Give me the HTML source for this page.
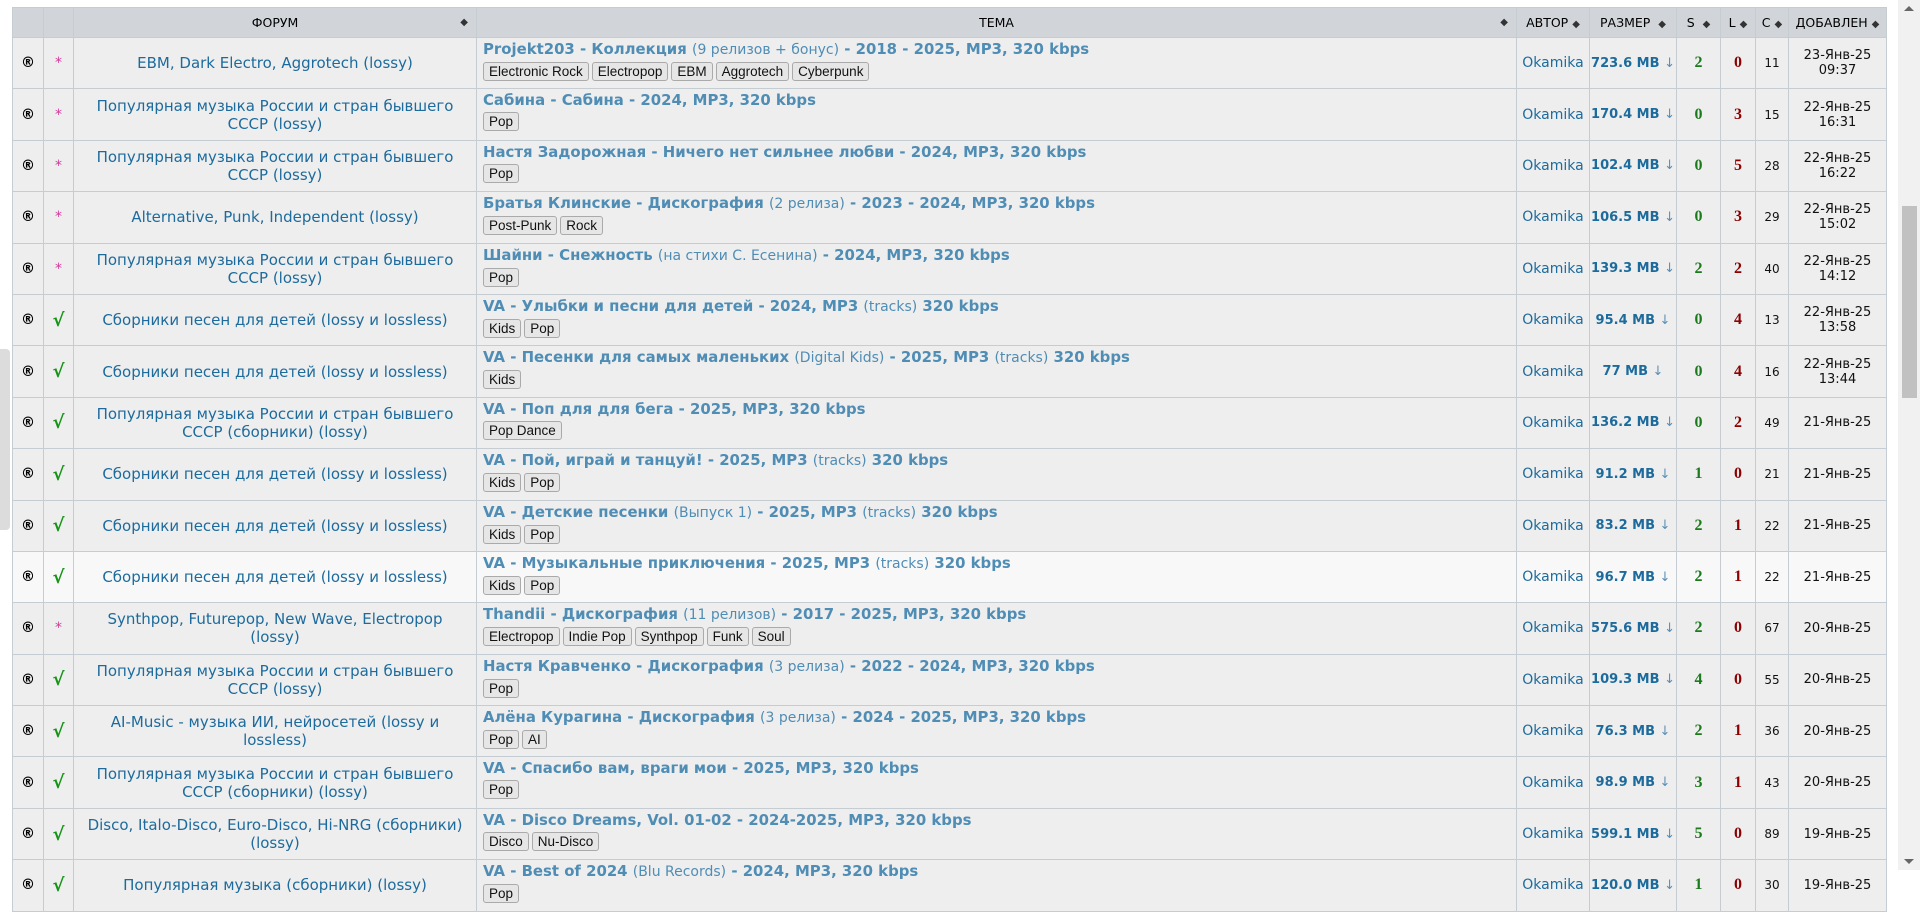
<!DOCTYPE html>
<html><head><meta charset="utf-8">
<style>
html,body{margin:0;padding:0;background:#fff;width:1920px;height:870px;overflow:hidden;font-family:"DejaVu Sans",Verdana,sans-serif;}
table{position:absolute;left:12px;top:7px;border-collapse:collapse;table-layout:fixed;width:1874px;}
td,th{border:1px solid #c5ccd2;text-align:center;vertical-align:middle;padding:0;overflow:hidden;}
th{background:#d1d5d9;height:29px;font-weight:normal;font-size:12.5px;color:#000;position:relative;}
th .s{font-size:10px;color:#333;}
tr.row{height:50.4px;}
td{background:#eeeeee;height:49.4px;font-size:13px;}
tr.hl td{background:#f8f8f8;}
.f{color:#1d6b9c;font-size:15px;line-height:18px;padding:0 8px;}
.t{text-align:left;padding:1px 6px 0 6px;vertical-align:top;}
.tt{color:#4f8db5;font-weight:bold;font-size:14.9px;line-height:18px;white-space:nowrap;display:block;margin-top:1px;}
.tt i{font-style:normal;font-weight:normal;font-size:14px;}
.tag{display:inline-block;vertical-align:top;font-family:"Liberation Sans",Arial,sans-serif;font-size:13.5px;color:#111;background:#e6e6e6;border:1px solid #aaa;border-radius:3px;padding:1px 5px;margin-right:3px;line-height:15px;margin-top:3px;}
.a{color:#1d6b9c;font-size:14px;}
.sz{color:#1d6b9c;font-weight:bold;font-size:13px;white-space:nowrap;}
.sz span{font-weight:normal;color:#5a8fb5;}
.se{color:#1b7a1b;font-weight:bold;font-family:"Liberation Serif",Georgia,serif;font-size:16px;}
.le{color:#8b0000;font-weight:bold;font-family:"Liberation Serif",Georgia,serif;font-size:16px;}
.c{font-size:12px;color:#111;}
.d{font-size:13px;color:#111;line-height:15px;}
.r{font-size:14px;font-weight:bold;}
.st{color:#d0379a;font-size:14px;}
.ok{color:#159415;font-size:18px;font-weight:bold;}
.sb{position:absolute;right:0;top:0;width:22px;height:870px;background:#f1f1f1;}
.sb .th{position:absolute;left:4px;top:206px;width:15px;height:192px;background:#c1c1c1;}
.lh{position:absolute;left:0;top:349px;width:10px;height:181px;background:#dcdcdc;border-radius:0 4px 4px 0;}
</style></head><body>
<table>
<colgroup><col style="width:31px"><col style="width:30px"><col style="width:403px"><col style="width:1040px"><col style="width:73px"><col style="width:87px"><col style="width:44px"><col style="width:35px"><col style="width:33px"><col style="width:98px"></colgroup>
<tr><th></th><th></th><th>ФОРУМ <span class="s" style="position:absolute;right:8px;top:9px">◆</span></th><th><span class="s" style="position:absolute;right:8px;top:9px">◆</span>ТЕМА</th><th>АВТОР <span class="s">◆</span></th><th>РАЗМЕР &nbsp;<span class="s">◆</span></th><th>S &nbsp;<span class="s">◆</span></th><th>L <span class="s">◆</span></th><th>C <span class="s">◆</span></th><th>ДОБАВЛЕН <span class="s">◆</span></th></tr>

<tr class="row"><td class="r">®</td><td class="st">*</td><td class="f">EBM, Dark Electro, Aggrotech (lossy)</td><td class="t"><span class="tt">Projekt203 - Коллекция <i>(9 релизов + бонус)</i> - 2018 - 2025, MP3, 320 kbps</span><span class="tag">Electronic Rock</span><span class="tag">Electropop</span><span class="tag">EBM</span><span class="tag">Aggrotech</span><span class="tag">Cyberpunk</span></td><td class="a">Okamika</td><td class="sz">723.6 MB <span>↓</span></td><td class="se">2</td><td class="le">0</td><td class="c">11</td><td class="d">23-Янв-25<br>09:37</td></tr>

<tr class="row"><td class="r">®</td><td class="st">*</td><td class="f">Популярная музыка России и стран бывшего СССР (lossy)</td><td class="t"><span class="tt">Сабина - Сабина - 2024, MP3, 320 kbps</span><span class="tag">Pop</span></td><td class="a">Okamika</td><td class="sz">170.4 MB <span>↓</span></td><td class="se">0</td><td class="le">3</td><td class="c">15</td><td class="d">22-Янв-25<br>16:31</td></tr>

<tr class="row"><td class="r">®</td><td class="st">*</td><td class="f">Популярная музыка России и стран бывшего СССР (lossy)</td><td class="t"><span class="tt">Настя Задорожная - Ничего нет сильнее любви - 2024, MP3, 320 kbps</span><span class="tag">Pop</span></td><td class="a">Okamika</td><td class="sz">102.4 MB <span>↓</span></td><td class="se">0</td><td class="le">5</td><td class="c">28</td><td class="d">22-Янв-25<br>16:22</td></tr>

<tr class="row"><td class="r">®</td><td class="st">*</td><td class="f">Alternative, Punk, Independent (lossy)</td><td class="t"><span class="tt">Братья Клинские - Дискография <i>(2 релиза)</i> - 2023 - 2024, MP3, 320 kbps</span><span class="tag">Post-Punk</span><span class="tag">Rock</span></td><td class="a">Okamika</td><td class="sz">106.5 MB <span>↓</span></td><td class="se">0</td><td class="le">3</td><td class="c">29</td><td class="d">22-Янв-25<br>15:02</td></tr>

<tr class="row"><td class="r">®</td><td class="st">*</td><td class="f">Популярная музыка России и стран бывшего СССР (lossy)</td><td class="t"><span class="tt">Шайни - Снежность <i>(на стихи С. Есенина)</i> - 2024, MP3, 320 kbps</span><span class="tag">Pop</span></td><td class="a">Okamika</td><td class="sz">139.3 MB <span>↓</span></td><td class="se">2</td><td class="le">2</td><td class="c">40</td><td class="d">22-Янв-25<br>14:12</td></tr>

<tr class="row"><td class="r">®</td><td class="ok">√</td><td class="f">Сборники песен для детей (lossy и lossless)</td><td class="t"><span class="tt">VA - Улыбки и песни для детей - 2024, MP3 <i>(tracks)</i> 320 kbps</span><span class="tag">Kids</span><span class="tag">Pop</span></td><td class="a">Okamika</td><td class="sz">95.4 MB <span>↓</span></td><td class="se">0</td><td class="le">4</td><td class="c">13</td><td class="d">22-Янв-25<br>13:58</td></tr>

<tr class="row"><td class="r">®</td><td class="ok">√</td><td class="f">Сборники песен для детей (lossy и lossless)</td><td class="t"><span class="tt">VA - Песенки для самых маленьких <i>(Digital Kids)</i> - 2025, MP3 <i>(tracks)</i> 320 kbps</span><span class="tag">Kids</span></td><td class="a">Okamika</td><td class="sz">77 MB <span>↓</span></td><td class="se">0</td><td class="le">4</td><td class="c">16</td><td class="d">22-Янв-25<br>13:44</td></tr>

<tr class="row"><td class="r">®</td><td class="ok">√</td><td class="f">Популярная музыка России и стран бывшего СССР (сборники) (lossy)</td><td class="t"><span class="tt">VA - Поп для для бега - 2025, MP3, 320 kbps</span><span class="tag">Pop Dance</span></td><td class="a">Okamika</td><td class="sz">136.2 MB <span>↓</span></td><td class="se">0</td><td class="le">2</td><td class="c">49</td><td class="d">21-Янв-25</td></tr>

<tr class="row"><td class="r">®</td><td class="ok">√</td><td class="f">Сборники песен для детей (lossy и lossless)</td><td class="t"><span class="tt">VA - Пой, играй и танцуй! - 2025, MP3 <i>(tracks)</i> 320 kbps</span><span class="tag">Kids</span><span class="tag">Pop</span></td><td class="a">Okamika</td><td class="sz">91.2 MB <span>↓</span></td><td class="se">1</td><td class="le">0</td><td class="c">21</td><td class="d">21-Янв-25</td></tr>

<tr class="row"><td class="r">®</td><td class="ok">√</td><td class="f">Сборники песен для детей (lossy и lossless)</td><td class="t"><span class="tt">VA - Детские песенки <i>(Выпуск 1)</i> - 2025, MP3 <i>(tracks)</i> 320 kbps</span><span class="tag">Kids</span><span class="tag">Pop</span></td><td class="a">Okamika</td><td class="sz">83.2 MB <span>↓</span></td><td class="se">2</td><td class="le">1</td><td class="c">22</td><td class="d">21-Янв-25</td></tr>

<tr class="row hl"><td class="r">®</td><td class="ok">√</td><td class="f">Сборники песен для детей (lossy и lossless)</td><td class="t"><span class="tt">VA - Музыкальные приключения - 2025, MP3 <i>(tracks)</i> 320 kbps</span><span class="tag">Kids</span><span class="tag">Pop</span></td><td class="a">Okamika</td><td class="sz">96.7 MB <span>↓</span></td><td class="se">2</td><td class="le">1</td><td class="c">22</td><td class="d">21-Янв-25</td></tr>

<tr class="row"><td class="r">®</td><td class="st">*</td><td class="f">Synthpop, Futurepop, New Wave, Electropop (lossy)</td><td class="t"><span class="tt">Thandii - Дискография <i>(11 релизов)</i> - 2017 - 2025, MP3, 320 kbps</span><span class="tag">Electropop</span><span class="tag">Indie Pop</span><span class="tag">Synthpop</span><span class="tag">Funk</span><span class="tag">Soul</span></td><td class="a">Okamika</td><td class="sz">575.6 MB <span>↓</span></td><td class="se">2</td><td class="le">0</td><td class="c">67</td><td class="d">20-Янв-25</td></tr>

<tr class="row"><td class="r">®</td><td class="ok">√</td><td class="f">Популярная музыка России и стран бывшего СССР (lossy)</td><td class="t"><span class="tt">Настя Кравченко - Дискография <i>(3 релиза)</i> - 2022 - 2024, MP3, 320 kbps</span><span class="tag">Pop</span></td><td class="a">Okamika</td><td class="sz">109.3 MB <span>↓</span></td><td class="se">4</td><td class="le">0</td><td class="c">55</td><td class="d">20-Янв-25</td></tr>

<tr class="row"><td class="r">®</td><td class="ok">√</td><td class="f">AI-Music - музыка ИИ, нейросетей (lossy и lossless)</td><td class="t"><span class="tt">Алёна Курагина - Дискография <i>(3 релиза)</i> - 2024 - 2025, MP3, 320 kbps</span><span class="tag">Pop</span><span class="tag">AI</span></td><td class="a">Okamika</td><td class="sz">76.3 MB <span>↓</span></td><td class="se">2</td><td class="le">1</td><td class="c">36</td><td class="d">20-Янв-25</td></tr>

<tr class="row"><td class="r">®</td><td class="ok">√</td><td class="f">Популярная музыка России и стран бывшего СССР (сборники) (lossy)</td><td class="t"><span class="tt">VA - Спасибо вам, враги мои - 2025, MP3, 320 kbps</span><span class="tag">Pop</span></td><td class="a">Okamika</td><td class="sz">98.9 MB <span>↓</span></td><td class="se">3</td><td class="le">1</td><td class="c">43</td><td class="d">20-Янв-25</td></tr>

<tr class="row"><td class="r">®</td><td class="ok">√</td><td class="f">Disco, Italo-Disco, Euro-Disco, Hi-NRG (сборники) (lossy)</td><td class="t"><span class="tt">VA - Disco Dreams, Vol. 01-02 - 2024-2025, MP3, 320 kbps</span><span class="tag">Disco</span><span class="tag">Nu-Disco</span></td><td class="a">Okamika</td><td class="sz">599.1 MB <span>↓</span></td><td class="se">5</td><td class="le">0</td><td class="c">89</td><td class="d">19-Янв-25</td></tr>

<tr class="row"><td class="r">®</td><td class="ok">√</td><td class="f">Популярная музыка (сборники) (lossy)</td><td class="t"><span class="tt">VA - Best of 2024 <i>(Blu Records)</i> - 2024, MP3, 320 kbps</span><span class="tag">Pop</span></td><td class="a">Okamika</td><td class="sz">120.0 MB <span>↓</span></td><td class="se">1</td><td class="le">0</td><td class="c">30</td><td class="d">19-Янв-25</td></tr>
</table>
<div class="lh"></div>
<div class="sb"><div style="position:absolute;left:6px;top:6px;width:0;height:0;border-left:5px solid transparent;border-right:5px solid transparent;border-bottom:5px solid #666"></div><div class="th"></div><div style="position:absolute;left:6px;bottom:6px;width:0;height:0;border-left:5px solid transparent;border-right:5px solid transparent;border-top:5px solid #666"></div></div>
</body></html>
